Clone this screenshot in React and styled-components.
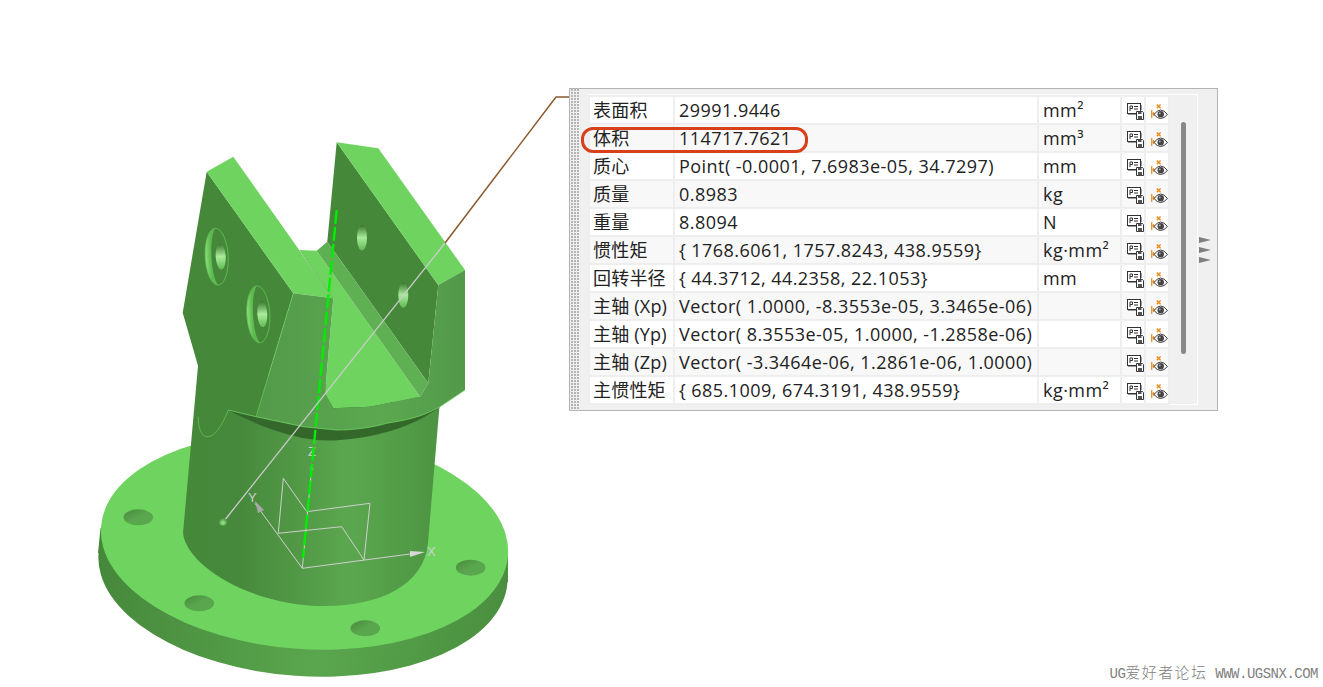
import React from 'react';
import styled, { createGlobalStyle } from 'styled-components';

const rows = [
  { name: '表面积', value: '29991.9446', unit: 'mm²' },
  { name: '体积', value: '114717.7621', unit: 'mm³' },
  { name: '质心', value: 'Point( -0.0001, 7.6983e-05, 34.7297)', unit: 'mm' },
  { name: '质量', value: '0.8983', unit: 'kg' },
  { name: '重量', value: '8.8094', unit: 'N' },
  { name: '惯性矩', value: '{ 1768.6061, 1757.8243, 438.9559}', unit: 'kg·mm²' },
  { name: '回转半径', value: '{ 44.3712, 44.2358, 22.1053}', unit: 'mm' },
  { name: '主轴 (Xp)', value: 'Vector( 1.0000, -8.3553e-05, 3.3465e-06)', unit: '' },
  { name: '主轴 (Yp)', value: 'Vector( 8.3553e-05, 1.0000, -1.2858e-06)', unit: '' },
  { name: '主轴 (Zp)', value: 'Vector( -3.3464e-06, 1.2861e-06, 1.0000)', unit: '' },
  { name: '主惯性矩', value: '{ 685.1009, 674.3191, 438.9559}', unit: 'kg·mm²' },
];

const SaveIcon = () => (
  <svg width="17" height="17" viewBox="0 0 17 17">
    <rect x="0.5" y="0.5" width="13" height="10" fill="#fff" stroke="#333" />
    <path d="M1 11.500h9M14.500 2v5" stroke="#999" fill="none" />
    <path d="M3 3v5M3 3h2.500v2.500H3M7 3.500h4M7 6h4" stroke="#333" fill="none" />
    <path d="M9.500 8.500h6l1 1v7h-7z" fill="#fff" stroke="#333" />
    <rect x="11" y="8.500" width="3.500" height="2.500" fill="#555" />
    <rect x="11" y="13" width="4" height="3.500" fill="#555" />
  </svg>
);

const EyeIcon = () => (
  <svg width="18" height="17" viewBox="0 0 18 17">
    <path d="M5.800 1.500l3.800 3.800M9.600 1.500L5.800 5.300" stroke="#f08a1d" strokeWidth="1.500" fill="none" />
    <path d="M0.700 7v8" stroke="#f08a1d" strokeWidth="1.200" fill="none" />
    <path d="M1 11h1.500M4.500 11L2 9.300v3.400z" stroke="#f08a1d" strokeWidth="0.600" fill="#f08a1d" />
    <path d="M3 11.500Q9.500 2.500 16.500 11.500Q9.500 19.500 3 11.500z" fill="#fff" stroke="#3a3a3a" strokeWidth="1" />
    <circle cx="9.700" cy="11.300" r="3.200" fill="#444" />
    <circle cx="8.800" cy="10.400" r="0.900" fill="#bbb" />
  </svg>
);

const Model = () => (
  <ModelSvg viewBox="0 0 569 687">
    <defs>
      <linearGradient id="side" gradientUnits="userSpaceOnUse" x1="98" y1="0" x2="508" y2="0">
        <stop offset="0" stopColor="#46883b" />
        <stop offset="0.55" stopColor="#5aa64e" />
        <stop offset="1" stopColor="#4a8f3f" />
      </linearGradient>
      <linearGradient id="cyl" gradientUnits="userSpaceOnUse" x1="183" y1="0" x2="439" y2="0">
        <stop offset="0" stopColor="#46883a" />
        <stop offset="0.22" stopColor="#47893c" />
        <stop offset="0.65" stopColor="#5ba74f" />
        <stop offset="1" stopColor="#4d9442" />
      </linearGradient>
      <linearGradient id="band" gradientUnits="userSpaceOnUse" x1="256" y1="0" x2="465" y2="0">
        <stop offset="0" stopColor="#53994a" />
        <stop offset="0.6" stopColor="#5ca850" />
        <stop offset="1" stopColor="#52994a" />
      </linearGradient>
      <linearGradient id="bore" x1="0" y1="0" x2="0" y2="1">
        <stop offset="0" stopColor="#3a7530" />
        <stop offset="0.5" stopColor="#a9ec9b" />
        <stop offset="1" stopColor="#5fba52" />
      </linearGradient>
      <linearGradient id="seat" x1="0" y1="0" x2="1" y2="0">
        <stop offset="0" stopColor="#86e076" />
        <stop offset="0.5" stopColor="#5dba50" />
      </linearGradient>
      <linearGradient id="hole" x1="0" y1="0" x2="1" y2="1">
        <stop offset="0" stopColor="#47893c" />
        <stop offset="0.5" stopColor="#5aa64e" />
      </linearGradient>
      <radialGradient id="ball" cx="0.5" cy="0.6" r="0.6">
        <stop offset="0" stopColor="#9bec8a" />
        <stop offset="1" stopColor="#4a9440" />
      </radialGradient>
    </defs>

    {/* flange */}
    <ellipse cx="303" cy="568" rx="205" ry="108" transform="rotate(4 303 568)" fill="url(#side)" />
    <path d="M100.500 528L98 553L508 582V555Z" fill="url(#side)" />
    <ellipse cx="304.500" cy="541" rx="204" ry="108" transform="rotate(4 304.500 541)" fill="#6fd45f" />
    {[[138.3, 517.3], [470.7, 567.7], [199.3, 603.3], [365.3, 628.3]].map(([cx, cy]) => (
      <ellipse key={cx} cx={cx} cy={cy} rx="14.800" ry="8" fill="url(#hole)" />
    ))}

    {/* cylinder */}
    <path d="M198 366L183 533C186 565 250 606 325 606C380 606 424 585 428 543L440 400Z" fill="url(#cyl)" />

    {/* undercut */}
    <path d="M228 410C262 428 306 444 340 440C372 438 412 428 440 407L380 400L256 405Z" fill="#34682b" />

    {/* left arm */}
    <path d="M206.700 171.700L293.300 293.300L256 416.700L228.300 410C221 428 214 437 206.700 436.700C201 436 198.300 428 198.300 416.700V366.700L182.700 312.700Z" fill="#46883a" />
    <path d="M228.300 410C221 428 214 437 206.700 436.700C201 436 198.300 428 198.300 416.700" stroke="#6fd45f" strokeWidth="0.600" fill="none" />
    <path d="M206.700 171.700L233.300 156.700L333.300 298.300L293.300 293.300Z" fill="#6fd45f" />

    {/* right arm back face */}
    <path d="M336.700 142.300L438.300 285L428.300 383.300L327.300 241.700Z" fill="#46883a" />
    <path d="M336.700 142.300L378.300 148.300L465 270L438.300 285Z" fill="#6fd45f" />

    {/* floor of the slot */}
    <path d="M300 250L316.700 250.700L420 396.700L370 406.700L333.300 408.300L325 393.300L333.300 298.300Z" fill="#6fd45f" />
    <path d="M316.700 250.700L327.300 241.700L428.300 383.300L420 396.700Z" fill="#5fb052" />
    <path d="M300 250L333 298" stroke="#5fb052" strokeWidth="0.800" />

    {/* side faces and lower band */}
    <path d="M293.300 293.300L333.300 298.300L325 393.300L333.300 408.300L370 406.700L420 396.700L428.300 383.300L438.300 285L465 270V390L440 406.700C420 418 405 420 386.700 423.300C370 428 352 430 336.700 430L303.300 426.700L256 416.700Z" fill="url(#band)" />
    <path d="M293.300 293.300L256 416.700" stroke="#6fd45f" strokeWidth="0.600" fill="none" />
    <path d="M228.300 410L256 416.700L303.300 426.700L336.700 430C352 430 370 428 386.700 423.300C405 420 420 418 440 406.700L465 390" stroke="#6fd45f" strokeWidth="0.800" fill="none" />

    {/* counterbores */}
    {[[216.7, 256.7], [258.3, 314.3]].map(([cx, cy]) => (
      <g key={cx} transform={`rotate(-3 ${cx} ${cy})`}>
        <ellipse cx={cx} cy={cy} rx="11.500" ry="28.500" fill="#46883a" stroke="#6fd45f" strokeWidth="0.600" />
        <path d={`M${cx} ${cy - 28.5}C${cx - 15} ${cy - 25} ${cx - 15} ${cy + 25} ${cx} ${cy + 28.5}C${cx - 7} ${cy + 20} ${cx - 7} ${cy - 20} ${cx} ${cy - 28.5}Z`} fill="url(#seat)" />
        <ellipse cx={cx + 4} cy={cy} rx="5" ry="13" fill="url(#bore)" />
      </g>
    ))}
    <ellipse cx="362" cy="237.700" rx="5" ry="12.700" fill="url(#bore)" />
    <ellipse cx="403.300" cy="295" rx="5" ry="12.700" fill="url(#bore)" />

    {/* axes */}
    <g stroke="#cfcfcf" fill="none" strokeWidth="1">
      <path d="M302.300 568.300L410 554M302.300 568.300L255 503.300" />
      <path d="M278.300 533.300L341.700 526.700L364 560M278.300 533.300L283.300 478.300L306.700 511.700L370 503.300L364 560" />
      <path d="M302.300 568.300L312 465" />
    </g>
    <path d="M410 551L425 552L410 557Z" fill="#d8d8d8" />
    <path d="M255 501L264 510L258 513Z" fill="#a8a8a8" />
    <path d="M309.500 470L311.700 463L314 470Z" fill="#a0a0a0" />
    <AxisLabel x="427" y="556">X</AxisLabel>
    <AxisLabel x="248" y="502">Y</AxisLabel>
    <AxisLabel x="308" y="456">Z</AxisLabel>

    <path d="M336.700 210L303 558" stroke="#00ee00" strokeWidth="2.400" strokeDasharray="14 3" fill="none" />
    <path d="M445 243L224 521" stroke="#cbcbcb" strokeWidth="1.300" fill="none" />
    <path d="M569 97H556L445 243" stroke="#8b5a2b" strokeWidth="1.500" fill="none" />
    <circle cx="223" cy="522" r="3.800" fill="url(#ball)" />
  </ModelSvg>
);

export default function App() {
  return (
    <Page>
      <GlobalStyle />
      <Model />
      <RightColumn>
        <Panel>
          <Grip />
          <Body>
            <Table>
              <colgroup>
                <col width="85" />
                <col width="364" />
                <col width="83" />
                <col width="24" />
                <col width="24" />
              </colgroup>
              <tbody>
                {rows.map((row) => (
                  <Row key={row.name}>
                    <NameCell>{row.name}</NameCell>
                    <Cell>{row.value}</Cell>
                    <Cell>{row.unit}</Cell>
                    <IconCell><SaveIcon /></IconCell>
                    <IconCell><EyeIcon /></IconCell>
                  </Row>
                ))}
              </tbody>
            </Table>
            <Track>
              <Thumb />
            </Track>
          </Body>
          <Arrows>
            <Arrow />
            <Arrow />
            <Arrow />
          </Arrows>
          <Highlight />
        </Panel>
        <Watermark>UG<WatermarkCjk>爱好者论坛</WatermarkCjk> WWW.UGSNX.COM</Watermark>
      </RightColumn>
    </Page>
  );
}

const GlobalStyle = createGlobalStyle`
  html, body {
    margin: 0;
    padding: 0;
    background: #fff;
  }
`;

const Page = styled.div`
  display: flex;
  width: 1323px;
  height: 687px;
  overflow: hidden;
`;

const ModelSvg = styled.svg`
  flex: none;
  width: 569px;
  height: 687px;
`;

const AxisLabel = styled.text`
  font-family: "Liberation Sans", sans-serif;
  font-size: 13px;
  fill: #cfcfcf;
`;

const RightColumn = styled.div`
  flex: 1;
  display: flex;
  flex-direction: column;
  padding: 88px 5px 4px 0;
`;

const Panel = styled.div`
  position: relative;
  box-sizing: border-box;
  display: flex;
  width: 649px;
  height: 323px;
  padding: 5px 0 5px 1px;
  background: #f0f0f0;
  border: 1px solid #b4b4b4;
`;

const Grip = styled.div`
  flex: none;
  width: 8px;
  margin: -5px 9px -5px 0;
  background-image: radial-gradient(circle at 1px 1px, #b5b5b5 1px, transparent 1.2px);
  background-size: 3px 3px;
`;

const Body = styled.div`
  display: flex;
  width: 609px;
  border: 1px solid #fff;
  border-left: 0;
`;

const Table = styled.table`
  width: 580px;
  height: 308px;
  border-collapse: collapse;
  table-layout: fixed;
  font-family: "Open Sans", "Noto Sans CJK SC", sans-serif;
  font-size: 18px;
  color: #222;
`;

const Row = styled.tr`
  height: 28px;
  background: #fff;
  &:nth-child(even) {
    background: #f8f8f8;
  }
`;

const Cell = styled.td`
  padding: 0 0 0 4px;
  border: 2px solid #eee;
  white-space: nowrap;
  overflow: hidden;
  line-height: 26px;
  letter-spacing: 0.45px;
`;

const NameCell = styled(Cell)`
  padding-left: 3px;
  letter-spacing: 0.2px;
`;

const IconCell = styled.td`
  padding: 2px 0 0 5px;
  border: 2px solid #eee;
  line-height: 0;
`;

const Track = styled.div`
  flex: 1;
  display: flex;
  justify-content: center;
  padding-top: 27px;
  background: #f0f0f0;
`;

const Thumb = styled.div`
  width: 5px;
  height: 232px;
  border-radius: 3px;
  background: #888;
`;

const Arrows = styled.div`
  display: flex;
  flex-direction: column;
  justify-content: center;
  gap: 4px;
  padding: 0 0 0 1px;
`;

const Arrow = styled.div`
  width: 0;
  height: 0;
  border-left: 12px solid #808080;
  border-top: 3.500px solid transparent;
  border-bottom: 3.500px solid transparent;
`;

const Highlight = styled.div`
  position: absolute;
  left: 11px;
  top: 38px;
  box-sizing: border-box;
  width: 227px;
  height: 26px;
  border: 3px solid #d8401c;
  border-radius: 12px;
`;

const Watermark = styled.div`
  margin-top: auto;
  text-align: right;
  white-space: nowrap;
  font-family: "Liberation Mono", "Noto Sans CJK SC", monospace;
  font-size: 14px;
  letter-spacing: -0.5px;
  color: #808080;
`;

const WatermarkCjk = styled.span`
  font-size: 15px;
  letter-spacing: 1.4px;
  font-weight: 300;
`;
